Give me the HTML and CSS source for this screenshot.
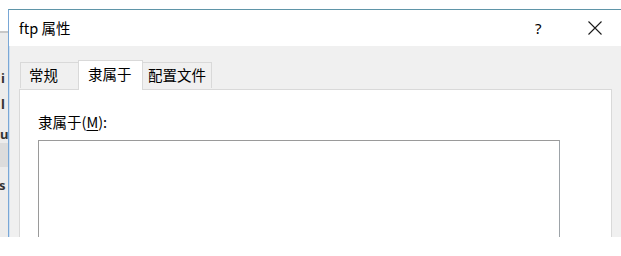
FILE: index.html
```html
<!DOCTYPE html>
<html>
<head>
<meta charset="utf-8">
<link rel="stylesheet" href="styles.css">
</head>
<body>
<div class="shot">
  <div class="behind">
    <div class="behind-top"></div>
    <div class="behind-body">
      <span class="frag f1">i</span>
      <span class="frag f2">l</span>
      <span class="frag f3">u</span>
      <span class="frag-block"></span>
      <span class="frag f4">s</span>
    </div>
  </div>
  <div class="dialog">
    <div class="titlebar">
      <span class="title">ftp 属性</span>
      <span class="help">?</span>
      <span class="close">
        <svg width="14" height="14" viewBox="0 0 14 14"><path d="M0.5 0.5 L13.5 13.5 M13.5 0.5 L0.5 13.5" stroke="#1a1a1a" stroke-width="1.1" fill="none"/></svg>
      </span>
    </div>
    <div class="content">
      <div class="tabs">
        <div class="tab first">常规</div>
        <div class="tab active">隶属于</div>
        <div class="tab last">配置文件</div>
      </div>
      <div class="panel">
        <div class="label">隶属于(<u>M</u>):</div>
        <div class="listbox"></div>
      </div>
    </div>
  </div>
</div>
</body>
</html>
```
FILE: styles.css
```css
* { box-sizing: border-box; }
html, body { margin: 0; padding: 0; background: #fff; }
body {
  font-family: "Noto Sans CJK SC", "Noto Sans", sans-serif;
  color: #000;
}
.shot {
  width: 621px;
  height: 237px;
  display: flex;
  overflow: hidden;
}
.behind {
  width: 8px;
  flex: none;
  display: flex;
  flex-direction: column;
}
.behind-top {
  height: 33px;
  background: #fff;
  border-bottom: 2px solid #c8c8c8;
}
.behind-body {
  flex: 1;
  background: #ececec;
  position: relative;
  overflow: hidden;
}
.frag {
  position: absolute;
  left: 1px;
  font-family: "Noto Sans", sans-serif;
  font-size: 13px;
  line-height: 14px;
  color: #333;
  font-weight: bold;
}
.f1 { top: 38px; }
.f2 { top: 64px; }
.f3 { top: 94px; left: 0; }
.f4 { top: 145px; left: -1px; }
.frag-block {
  position: absolute;
  left: 0; top: 110px;
  width: 8px; height: 24px;
  background: #dcdcdc;
}
.dialog {
  flex: 1;
  margin-top: 9px;
  border-top: 1px solid #5f95a8;
  border-left: 1px solid #79a7d6;
  display: flex;
  flex-direction: column;
  background: #f0f0f0;
  box-shadow: inset 1px 0 0 #cfe0f1;
}
.titlebar {
  height: 36px;
  background: #fff;
  display: flex;
  align-items: center;
  padding-left: 10px;
  flex: none;
}
.title {
  font-size: 14.5px;
  flex: 1;
  padding-bottom: 1px;
}
.help {
  font-family: "Noto Sans", sans-serif;
  font-size: 15px;
  width: 53px;
  text-align: left;
  padding-bottom: 1px;
}
.close {
  width: 33px;
  display: flex;
  align-items: center;
}
.close svg { display: block; }
.content {
  flex: 1;
  padding: 14px 9px 0 10px;
  display: flex;
  flex-direction: column;
}
.tabs {
  display: flex;
  align-items: flex-end;
  height: 29px;
  padding-left: 1px;
  position: relative;
  z-index: 1;
}
.tab {
  height: 26px;
  border: 1px solid #d9d9d9;
  border-bottom: none;
  background: #f0f0f0;
  font-size: 14.5px;
  line-height: 24px;
  margin-bottom: 1px;
  white-space: nowrap;
}
.tab.first { width: 59px; padding-left: 8px; }
.tab.active {
  height: 30px;
  background: #fff;
  margin-bottom: -1px;
  width: 65px;
  padding-left: 9px;
  line-height: 26px;
  margin-left: -1px;
}
.tab.last { margin-left: -1px; padding-left: 5px; width: 70px; }
.panel {
  flex: 1;
  background: #fff;
  border: 1px solid #d9d9d9;
  border-bottom: none;
  padding: 22px 0 0 18px;
}
.label {
  font-size: 14.5px;
  line-height: 20px;
  height: 28px;
}
.label u { text-underline-offset: 2px; }
.listbox {
  width: 522px;
  height: 120px;
  border: 1px solid #9a9a9a;
  border-right-color: #9da3a8;
  border-bottom: none;
  background: #fff;
}
```
